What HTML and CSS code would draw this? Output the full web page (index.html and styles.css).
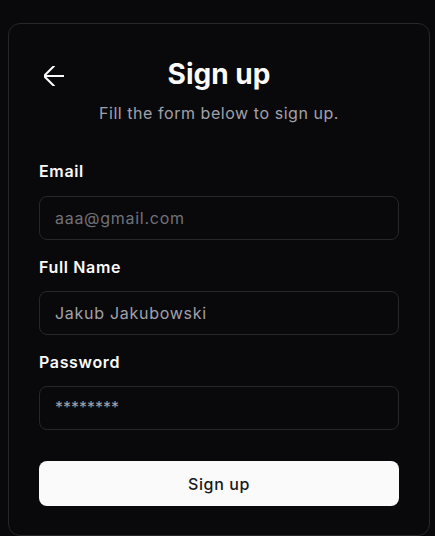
FILE: index.html
```html
<!DOCTYPE html>
<html lang="en">
<head>
<meta charset="utf-8">
<title>Sign up</title>
<link rel="stylesheet" href="styles.css">
</head>
<body>
<div class="card">
  <div class="header">
    <button class="back" type="button" aria-label="Back">
      <svg width="20" height="20" viewBox="5 5 14 14" fill="none" stroke="currentColor" stroke-width="1.45" stroke-linecap="round" stroke-linejoin="round"><path d="m12 19-7-7 7-7"/><path d="M19 12H5"/></svg>
    </button>
    <h1 class="title">Sign up</h1>
    <span class="spacer"></span>
  </div>
  <p class="subtitle">Fill the form below to sign up.</p>
  <form class="form">
    <div class="field">
      <label class="label">Email</label>
      <div class="input placeholder">aaa@gmail.com</div>
    </div>
    <div class="field">
      <label class="label">Full Name</label>
      <div class="input">Jakub Jakubowski</div>
    </div>
    <div class="field">
      <label class="label">Password</label>
      <div class="input stars">********</div>
    </div>
    <button class="submit" type="button">Sign up</button>
  </form>
</div>
</body>
</html>
```
FILE: styles.css
```css
* { box-sizing: border-box; }
html, body {
  margin: 0;
  padding: 0;
  background: #09090b;
  font-family: Inter, "Noto Sans", sans-serif;
  color: #fafafa;
}
.card {
  width: 422px;
  margin: 23px 0 0 8px;
  padding: 30px 30px 29px;
  border: 1px solid #27272a;
  border-radius: 12px;
  background: #09090b;
}
.header {
  display: flex;
  align-items: center;
  height: 40px;
}
.back {
  width: 30px;
  height: 30px;
  padding: 0;
  border: 0;
  background: none;
  color: #fafafa;
  display: flex;
  align-items: center;
  justify-content: center;
  margin-top: 3px;
}
.spacer { width: 30px; }
.title {
  flex: 1;
  margin: 0;
  text-align: center;
  font-size: 28px;
  font-weight: 700;
  line-height: 36px;
  letter-spacing: 0;
}
.subtitle {
  margin: 7px 0 0;
  text-align: center;
  font-size: 16px;
  line-height: 24px;
  color: #a1a1aa;
  letter-spacing: 0.55px;
}
.form {
  margin-top: 34px;
  display: flex;
  flex-direction: column;
  gap: 15px;
}
.field {
  display: flex;
  flex-direction: column;
  gap: 12px;
}
.field:first-child { gap: 13px; }
.label {
  font-size: 16px;
  font-weight: 600;
  line-height: 24px;
  color: #fafafa;
  letter-spacing: 0.65px;
}
.input {
  height: 44px;
  border: 1px solid #27272a;
  border-radius: 8px;
  padding: 0 15px;
  display: flex;
  align-items: center;
  font-size: 16px;
  color: #a1a1aa;
  letter-spacing: 0.72px;
}
.input.placeholder { color: #71717a; }
.input.stars { color: #a1a1aa; letter-spacing: 0; padding-bottom: 3px; }
.submit {
  margin-top: 16px;
  height: 45px;
  border: 0;
  border-radius: 8px;
  background: #fafafa;
  color: #18181b;
  font-family: Inter, "Noto Sans", sans-serif;
  font-size: 16px;
  font-weight: 500;
  letter-spacing: 0.6px;
}
```
